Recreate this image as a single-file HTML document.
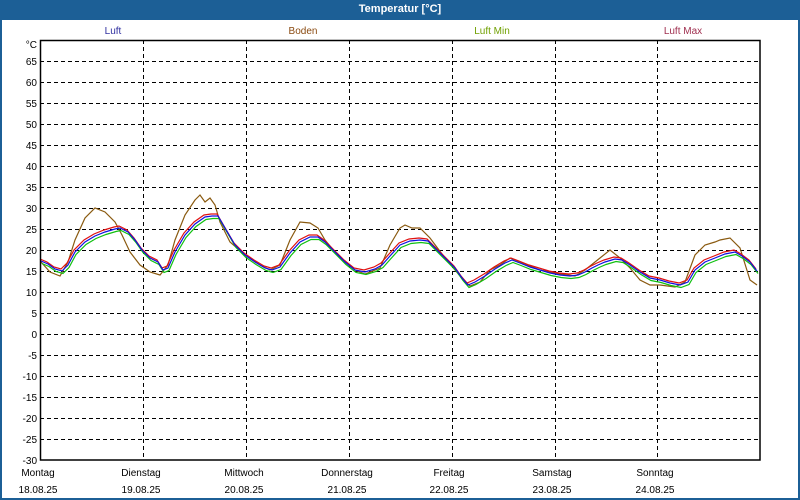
<!DOCTYPE html>
<html><head><meta charset="utf-8"><style>
html,body{margin:0;padding:0;width:800px;height:500px;overflow:hidden;background:#fff}
#f{position:absolute;left:0;top:0;width:800px;height:500px;box-sizing:border-box;border:2px solid #1c5f96;border-top:none}
#t{position:absolute;left:0;top:0;width:800px;height:20px;background:#1c5f96;color:#fff;font:bold 11px "Liberation Sans",sans-serif;text-align:center;line-height:19px}
svg{position:absolute;left:0;top:0}
text{font-family:"Liberation Sans",sans-serif;font-size:10px}
</style></head><body>
<div id="f"></div>
<div id="t">Temperatur [°C]</div>
<svg width="800" height="500" viewBox="0 0 800 500">
<text x="113" y="34" fill="#3030a0" text-anchor="middle">Luft</text>
<text x="303" y="34" fill="#8a4a10" text-anchor="middle">Boden</text>
<text x="492" y="34" fill="#70a000" text-anchor="middle">Luft Min</text>
<text x="683" y="34" fill="#a03050" text-anchor="middle">Luft Max</text>
<g stroke="#000" stroke-dasharray="4,3" stroke-width="1">
<path d="M40 61.5H760M40 82.5H760M40 103.5H760M40 124.5H760M40 145.5H760M40 166.5H760M40 187.5H760M40 208.5H760M40 229.5H760M40 250.5H760M40 271.5H760M40 292.5H760M40 313.5H760M40 334.5H760M40 355.5H760M40 376.5H760M40 397.5H760M40 418.5H760M40 439.5H760"/>
<path d="M143.5 40V460M246.5 40V460M349.5 40V460M452.5 40V460M555.5 40V460M657.5 40V460"/>
</g>
<g text-anchor="end" fill="#000">
<text x="37" y="48">°C</text>
<text x="37" y="65">65</text><text x="37" y="86">60</text><text x="37" y="107">55</text><text x="37" y="128">50</text><text x="37" y="149">45</text><text x="37" y="170">40</text><text x="37" y="191">35</text><text x="37" y="212">30</text><text x="37" y="233">25</text><text x="37" y="254">20</text><text x="37" y="275">15</text><text x="37" y="296">10</text><text x="37" y="317">5</text><text x="37" y="338">0</text><text x="37" y="359">-5</text><text x="37" y="380">-10</text><text x="37" y="401">-15</text><text x="37" y="422">-20</text><text x="37" y="443">-25</text><text x="37" y="464">-30</text>
</g>
<g text-anchor="middle" fill="#000">
<text x="38" y="476">Montag</text><text x="38" y="493">18.08.25</text>
<text x="141" y="476">Dienstag</text><text x="141" y="493">19.08.25</text>
<text x="244" y="476">Mittwoch</text><text x="244" y="493">20.08.25</text>
<text x="347" y="476">Donnerstag</text><text x="347" y="493">21.08.25</text>
<text x="449" y="476">Freitag</text><text x="449" y="493">22.08.25</text>
<text x="552" y="476">Samstag</text><text x="552" y="493">23.08.25</text>
<text x="655" y="476">Sonntag</text><text x="655" y="493">24.08.25</text>
</g>
<defs>
<polyline id="c" points="41,261 48,264 55,269 62,271 68,265 75,252 85,242 95,236 105,232 115,229 120,228 128,232 135,240 142,250 150,258 158,262 163,270 168,268 175,252 185,235 195,224 205,217 212,216 218,216 225,228 235,245 245,255 255,262 265,268 272,270 280,267 290,253 300,242 310,237 318,237 325,242 335,252 345,262 355,270 365,272 375,269 382,265 390,256 400,245 410,241 420,240 428,241 435,248 445,258 455,268 462,278 468,285 475,282 485,276 495,269 505,263 512,260 520,263 530,267 540,270 550,273 560,275 570,276 578,275 585,272 592,268 598,265 605,262 615,259 622,260 630,265 640,272 650,278 660,280 670,283 680,285 688,282 695,270 705,262 715,258 725,254 735,252 742,256 750,262 757,271"/>
</defs>
<g fill="none" stroke-width="1.2">
<polyline stroke="#8a5a10" points="41,262 50,272 60,276 68,262 75,240 85,218 95,208 105,212 115,222 122,235 130,252 140,265 150,272 160,275 168,265 175,240 185,215 195,200 200,195 205,202 210,198 215,205 220,222 230,242 245,255 260,265 270,270 280,265 290,240 300,222 310,223 318,228 325,240 340,258 355,270 365,274 380,268 390,245 400,228 405,225 412,228 420,228 430,238 445,258 460,276 470,286 480,282 490,270 500,265 510,258 520,262 540,270 560,274 575,276 585,270 595,262 600,258 610,250 620,258 630,268 640,280 650,285 660,285 675,287 685,282 695,255 705,245 715,242 720,240 730,238 740,248 750,280 757,285"/>
<use href="#c" stroke="#10c010" transform="translate(1,2.5)"/>
<use href="#c" stroke="#e01010" transform="translate(-1,-2)"/>
<use href="#c" stroke="#1010e0"/>
</g>
<rect x="40.5" y="40.5" width="719.5" height="419.5" fill="none" stroke="#000" stroke-width="1.5"/>
</svg>
</body></html>
